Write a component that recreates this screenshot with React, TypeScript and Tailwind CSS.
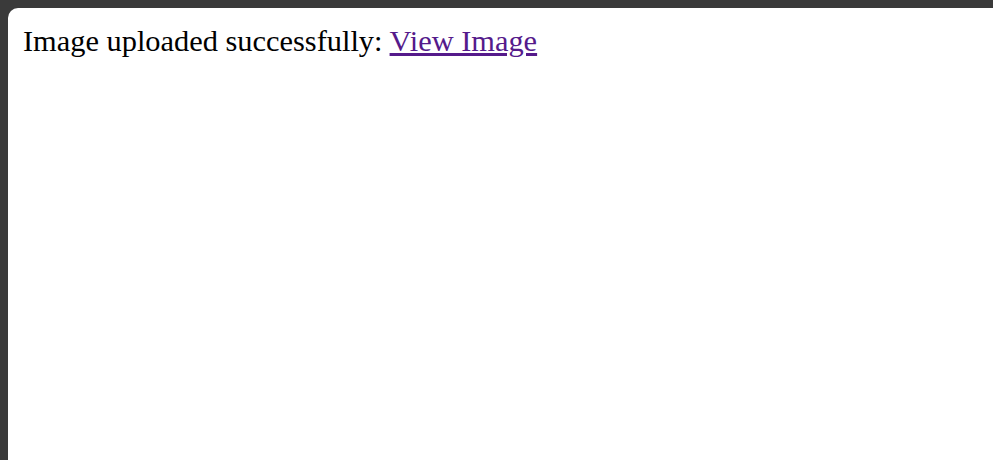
export default function App() {
  return (
    <div className="h-[460px] w-[993px] bg-[#3a3a3a] pl-2 pt-2 overflow-hidden">
      <div className="h-full w-full rounded-tl-[10px] bg-white px-[15px] pt-[16px]">
        <p className="font-['Liberation_Serif',serif] text-[30.4px] leading-[1.15] text-black">
          Image uploaded successfully:{' '}
          <a href="#" className="text-[#551a8b] underline">
            View Image
          </a>
        </p>
      </div>
    </div>
  );
}
